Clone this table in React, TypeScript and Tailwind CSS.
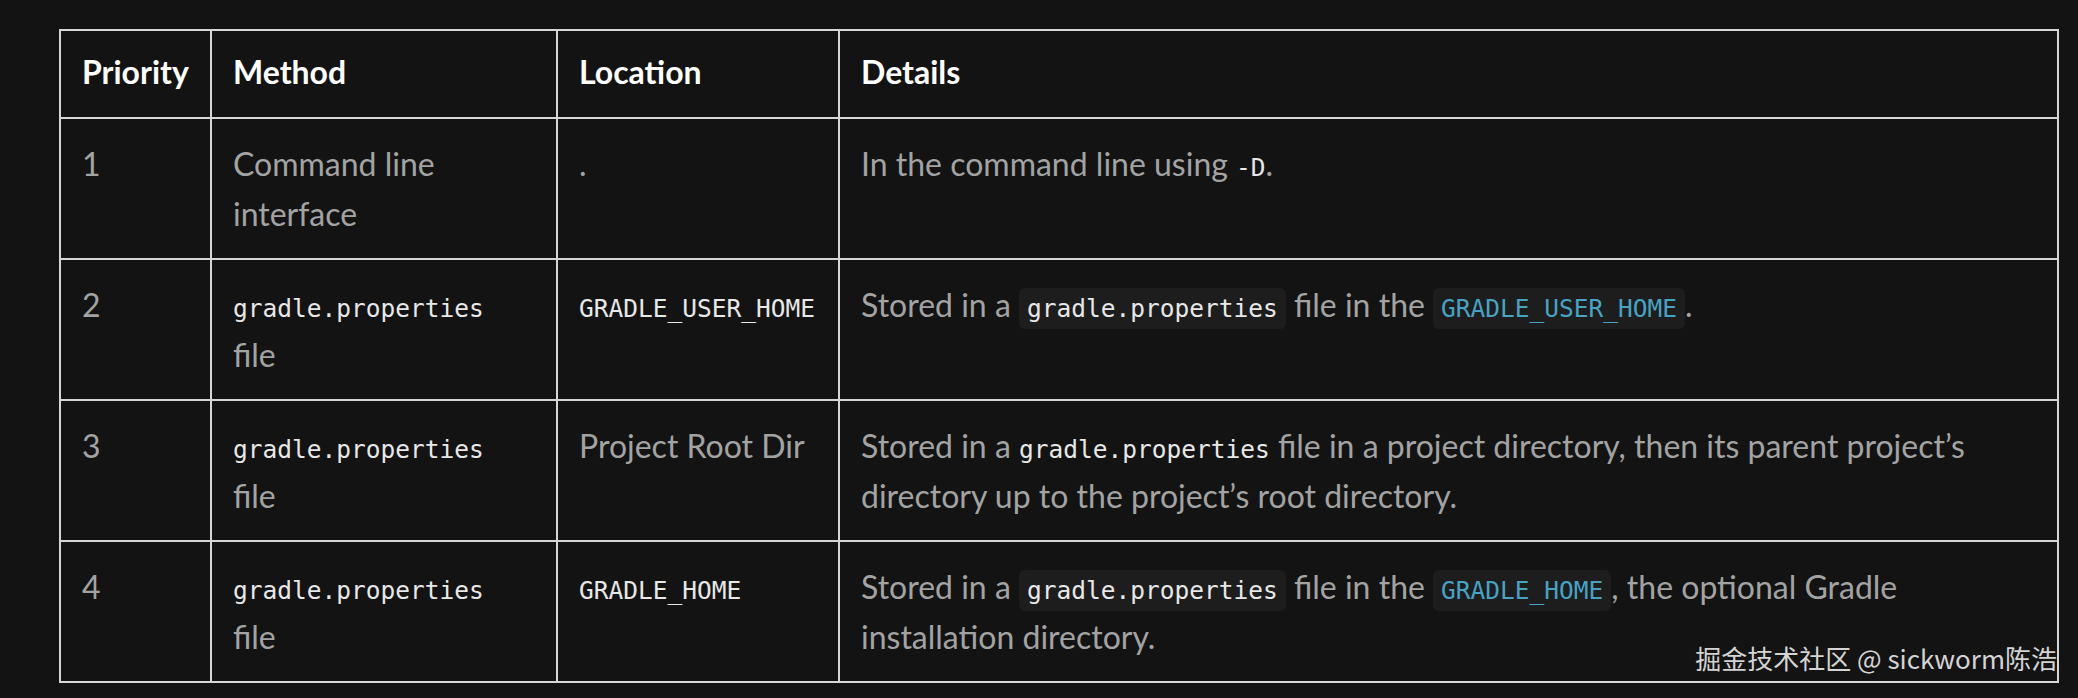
import React from "react";

const sans = "font-['Lato','Noto_Sans_CJK_SC',sans-serif]";
const mono = "font-['DejaVu_Sans_Mono','Liberation_Mono',monospace] text-[24.5px] leading-none";

function Code({ children, boxed, accent }: { children: React.ReactNode; boxed?: boolean; accent?: boolean }) {
  return (
    <code
      className={`${mono} ${boxed ? "rounded-[6px] bg-[#1d1d1d] px-[8px] py-[6px]" : ""} ${
        accent ? "text-[#47a3c4]" : "text-[#e8e8e8]"
      }`}
    >
      {children}
    </code>
  );
}

const headCell = "bg-[#131313] px-[21px] pt-[16px] pb-[20px] font-bold text-white";
const bodyCell = "bg-[#131313] px-[21px] pt-[20px] pb-[19px] text-[#a3a3a3]";

type Row = {
  priority: string;
  method: React.ReactNode;
  location: React.ReactNode;
  details: React.ReactNode;
};

const propsFile = (
  <>
    <Code>gradle.properties</Code>
    <br />
    file
  </>
);

const rows: Row[] = [
  {
    priority: "1",
    method: "Command line interface",
    location: ".",
    details: (
      <>
        In the command line using <Code>-D</Code>.
      </>
    ),
  },
  {
    priority: "2",
    method: propsFile,
    location: <Code>GRADLE_USER_HOME</Code>,
    details: (
      <>
        Stored in a <Code boxed>gradle.properties</Code> file in the{" "}
        <Code boxed accent>
          GRADLE_USER_HOME
        </Code>
        .
      </>
    ),
  },
  {
    priority: "3",
    method: propsFile,
    location: "Project Root Dir",
    details: (
      <>
        Stored in a <Code>gradle.properties</Code> file in a project directory, then its parent project’s
        directory up to the project’s root directory.
      </>
    ),
  },
  {
    priority: "4",
    method: propsFile,
    location: <Code>GRADLE_HOME</Code>,
    details: (
      <>
        Stored in a <Code boxed>gradle.properties</Code> file in the{" "}
        <Code boxed accent>
          GRADLE_HOME
        </Code>
        , the optional Gradle installation directory.
      </>
    ),
  },
];

export default function App() {
  return (
    <div className={`relative h-[698px] w-full overflow-hidden bg-[#131313] pl-[59px] pt-[29px] ${sans} text-[32px] leading-[50px]`}>
      <div className="grid w-[2000px] grid-cols-[149px_344px_280px_1217px] gap-[2px] bg-[#d6d6d6] p-[2px]">
        <div className={headCell}>Priority</div>
        <div className={headCell}>Method</div>
        <div className={headCell}>Location</div>
        <div className={headCell}>Details</div>
        {rows.map((r) => (
          <React.Fragment key={r.priority}>
            <div className={bodyCell}>{r.priority}</div>
            <div className={bodyCell}>{r.method}</div>
            <div className={bodyCell}>{r.location}</div>
            <div className={bodyCell}>{r.details}</div>
          </React.Fragment>
        ))}
      </div>
      <div className="absolute right-[21px] top-[638px] font-['Noto_Sans_CJK_SC',sans-serif] text-[26px] leading-[40px] text-[#d4d4d4]">
        掘金技术社区 @ sickworm陈浩
      </div>
    </div>
  );
}
